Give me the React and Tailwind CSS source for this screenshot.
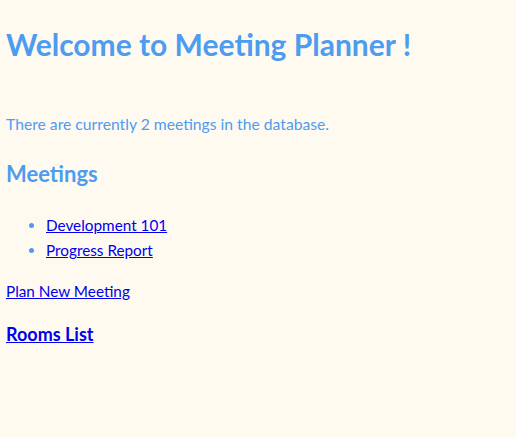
const meetings = ['Development 101', 'Progress Report'];

export default function App() {
  return (
    <div className="min-h-screen bg-[#fffaf0] px-1.5 font-['Lato',sans-serif] text-[#4d9cf0]">
      <h1 className="pt-6 text-[30px] font-bold leading-[40px]">Welcome to Meeting Planner !</h1>
      <p className="mt-12 text-[15.7px] leading-6">There are currently {meetings.length} meetings in the database.</p>
      <h2 className="mt-[22px] text-[22px] font-bold leading-8">Meetings</h2>
      <ul className="mt-[23px] list-disc pl-10 text-[15.3px] leading-[25px]">
        {meetings.map(m => (
          <li key={m}>
            <a href="#" className="text-[#0000ee] underline">{m}</a>
          </li>
        ))}
      </ul>
      <p className="mt-4 text-[15.3px] leading-6">
        <a href="#" className="text-[#0000ee] underline">Plan New Meeting</a>
      </p>
      <h3 className="mt-[18px] text-[18px] font-bold leading-[26px]">
        <a href="#" className="text-[#0000ee] underline">Rooms List</a>
      </h3>
    </div>
  );
}
